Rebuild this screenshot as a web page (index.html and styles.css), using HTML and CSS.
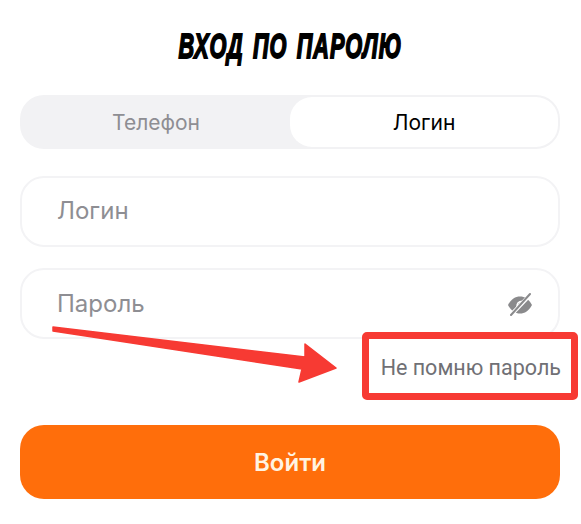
FILE: index.html
```html
<!DOCTYPE html>
<html lang="ru">
<head>
<meta charset="utf-8">
<title>Вход по паролю</title>
<link rel="stylesheet" href="styles.css">
</head>
<body>
<main class="form">
  <h1 class="title"><span class="title-text">Вход по паролю</span></h1>
  <div class="tabs">
    <div class="tab">Телефон</div>
    <div class="tab tab-active">Логин</div>
  </div>
  <div class="field">Логин</div>
  <div class="field field-password">
    <span>Пароль</span>
    <svg class="eye" viewBox="0 0 26 24" width="26" height="24" aria-hidden="true">
      <path fill="#8a8a8c" d="M1 13C4 7 8.500 4.500 13 4.500S22 7 25 13c-3 6-7.500 8.500-12 8.500S4 19 1 13Z"/>
      <path fill="none" stroke="#fff" stroke-width="1.500" stroke-linecap="round" d="M10 15C9.800 11.500 12 9.500 15.500 9.300"/>
      <path stroke="#fff" stroke-width="4" d="M3 24 25 1"/>
      <path stroke="#8a8a8c" stroke-width="2" stroke-linecap="round" d="M4 23 23 2"/>
    </svg>
  </div>
  <div class="forgot"><a class="forgot-link">Не помню пароль</a></div>
  <button class="submit" type="button">Войти</button>
</main>
<svg class="arrow" viewBox="0 0 581 524" width="581" height="524" aria-hidden="true">
  <path fill="#f73a33" stroke="#f73a33" stroke-width="1.500" stroke-linejoin="round" d="M53 327 L305 357 L305 344 L336 368 L299 382 L302 369 L53 331 Z"/>
</svg>
<div class="frame"></div>
</body>
</html>
```
FILE: styles.css
```css
* { box-sizing: border-box; }
html, body { margin: 0; height: 524px; background: #fff; overflow: hidden; }
body { position: relative; font-family: "Inter", "Liberation Sans", sans-serif; }
.form { display: flex; flex-direction: column; padding: 0 21px 0 20px; }
.title {
  margin: 27px 0 0;
  height: 68px;
  text-align: center;
  text-transform: uppercase;
  font-family: "Liberation Sans", sans-serif;
  font-style: italic;
  font-weight: 700;
  font-size: 35px;
  line-height: 38px;
  letter-spacing: 1.500px;
  word-spacing: 4px;
  color: #000;
  -webkit-text-stroke: 1.800px #000;
}
.title-text { display: inline-block; transform: scaleX(0.62); white-space: nowrap; }
.tabs {
  display: flex;
  height: 54px;
  padding: 2px;
  border-radius: 24px;
  background: #f2f2f4;
}
.tab {
  flex: 1;
  display: flex;
  align-items: center;
  justify-content: center;
  font-size: 21px;
  color: #8e8e93;
  border-radius: 22px;
}
.tab-active { flex: 0 0 268px; background: #fff; color: #000; }
.field {
  display: flex;
  align-items: center;
  justify-content: space-between;
  height: 71px;
  margin-top: 27px;
  padding: 0 25px 2px 35px;
  border: 2px solid #f3f3f5;
  border-radius: 24px;
  font-size: 24px;
  color: #8e8e93;
}
.field-password { margin-top: 21px; padding-bottom: 0; }
.eye { flex: none; }
.forgot { display: flex; justify-content: flex-end; height: 86px; padding-top: 15px; }
.forgot-link { font-family: "Roboto", sans-serif; font-size: 21.500px; line-height: 28px; color: #707075; white-space: nowrap; margin-right: -1px; }
.submit {
  height: 74px;
  border: 0;
  border-radius: 24px;
  background: #ff6e0b;
  color: #fff3e2;
  font-family: inherit;
  font-size: 24px;
  font-weight: 600;
}
.arrow { position: absolute; left: 0; top: 0; pointer-events: none; }
.frame {
  position: absolute;
  left: 362px;
  top: 332px;
  width: 216px;
  height: 68px;
  border: 7px solid #f73a33;
  border-radius: 5px;
}
```
